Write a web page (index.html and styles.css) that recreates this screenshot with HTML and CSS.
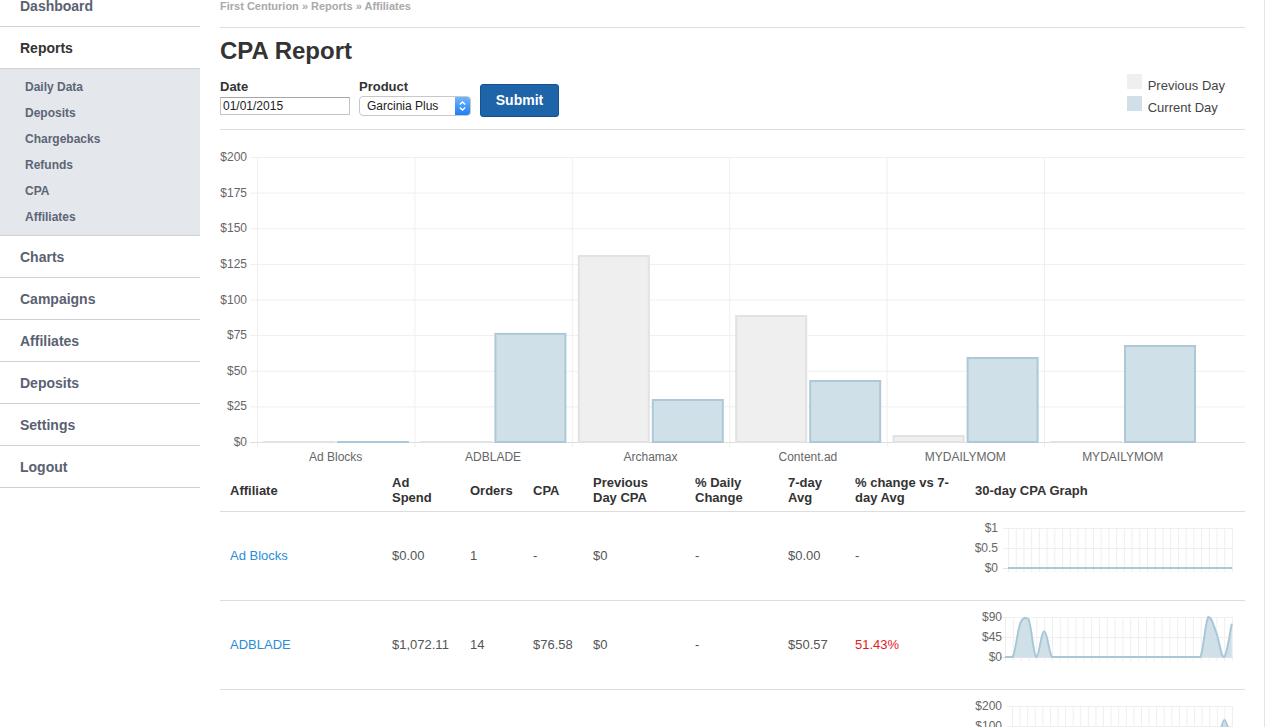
FILE: index.html
```html
<!DOCTYPE html>
<html lang="en">
<head>
<meta charset="utf-8">
<title>CPA Report</title>
<link rel="stylesheet" href="styles.css">
</head>
<body>
<div class="layout">
  <nav class="sidebar">
    <ul class="nav">
      <li><a class="nav-link" href="#">Dashboard</a></li>
      <li><a class="nav-link active" href="#">Reports</a>
        <ul class="subnav">
          <li><a href="#">Daily Data</a></li>
          <li><a href="#">Deposits</a></li>
          <li><a href="#">Chargebacks</a></li>
          <li><a href="#">Refunds</a></li>
          <li><a href="#">CPA</a></li>
          <li><a href="#">Affiliates</a></li>
        </ul>
      </li>
      <li><a class="nav-link" href="#">Charts</a></li>
      <li><a class="nav-link" href="#">Campaigns</a></li>
      <li><a class="nav-link" href="#">Affiliates</a></li>
      <li><a class="nav-link" href="#">Deposits</a></li>
      <li><a class="nav-link" href="#">Settings</a></li>
      <li><a class="nav-link" href="#">Logout</a></li>
    </ul>
  </nav>

  <main class="main">
    <div class="breadcrumb">First Centurion » Reports » Affiliates</div>
    <h1 class="title">CPA Report</h1>

    <div class="toolbar">
      <form class="filters">
        <div class="field">
          <label class="field-label">Date</label>
          <input class="date-input" type="text" value="01/01/2015">
        </div>
        <div class="field">
          <label class="field-label">Product</label>
          <div class="select">
            <span class="select-text">Garcinia Plus</span>
            <span class="select-arrow">
              <svg width="15" height="18" viewBox="0 0 15 18"><path d="M4.8 7.6 7.5 4.9 10.2 7.6M4.8 10.4 7.5 13.1 10.2 10.4" fill="none" stroke="#fff" stroke-width="1.4"/></svg>
            </span>
          </div>
        </div>
        <button class="btn-submit" type="button">Submit</button>
      </form>
      <ul class="legend">
        <li><span class="swatch swatch-prev"></span><span class="legend-text">Previous Day</span></li>
        <li><span class="swatch swatch-cur"></span><span class="legend-text">Current Day</span></li>
      </ul>
    </div>

    <svg class="chart" width="1025" height="340" viewBox="220 130 1025 340">
      <path class="grid-line" d="M250,157.5H1245M250,193.1H1245M250,228.8H1245M250,264.4H1245M250,300H1245M250,335.6H1245M250,371.3H1245M250,406.9H1245"/>
      <path class="grid-line" d="M257.5,157V447M414.9,157V447M572.3,157V447M729.7,157V447M887.1,157V447M1044.5,157V447"/>
      <path class="axis-line" d="M250,442.5H1245"/>
      <g class="axis-label y-label">
        <text x="247" y="161">$200</text>
        <text x="247" y="196.6">$175</text>
        <text x="247" y="232.3">$150</text>
        <text x="247" y="267.9">$125</text>
        <text x="247" y="303.5">$100</text>
        <text x="247" y="339.1">$75</text>
        <text x="247" y="374.8">$50</text>
        <text x="247" y="410.4">$25</text>
        <text x="247" y="446">$0</text>
      </g>
      <line class="bar-prev" x1="263" y1="442" x2="335" y2="442"/>
      <line class="bar-cur" x1="337" y1="442" x2="409" y2="442"/>
      <line class="bar-prev" x1="420.4" y1="442" x2="492.4" y2="442"/>
      <rect class="bar-cur" x="495.4" y="333.9" width="70" height="108.1"/>
      <rect class="bar-prev" x="578.8" y="256" width="70" height="186"/>
      <rect class="bar-cur" x="652.8" y="400" width="70" height="42"/>
      <rect class="bar-prev" x="736.2" y="316" width="70" height="126"/>
      <rect class="bar-cur" x="810.2" y="381" width="70" height="61"/>
      <rect class="bar-prev" x="893.6" y="436" width="70" height="6"/>
      <rect class="bar-cur" x="967.6" y="358" width="70" height="84"/>
      <line class="bar-prev" x1="1050" y1="442" x2="1122" y2="442"/>
      <rect class="bar-cur" x="1125" y="346" width="70" height="96"/>
      <g class="axis-label x-label">
        <text x="335.7" y="461">Ad Blocks</text>
        <text x="493.1" y="461">ADBLADE</text>
        <text x="650.5" y="461">Archamax</text>
        <text x="807.9" y="461">Content.ad</text>
        <text x="965.3" y="461">MYDAILYMOM</text>
        <text x="1122.7" y="461">MYDAILYMOM</text>
      </g>
    </svg>

    <table class="report">
      <colgroup>
        <col class="c-aff"><col class="c-spend"><col class="c-orders"><col class="c-cpa"><col class="c-prev"><col class="c-daily"><col class="c-avg"><col class="c-change"><col class="c-graph">
      </colgroup>
      <thead>
        <tr>
          <th>Affiliate</th>
          <th>Ad<br>Spend</th>
          <th>Orders</th>
          <th>CPA</th>
          <th>Previous<br>Day CPA</th>
          <th>% Daily<br>Change</th>
          <th>7-day<br>Avg</th>
          <th>% change vs 7-<br>day Avg</th>
          <th>30-day CPA Graph</th>
        </tr>
      </thead>
      <tbody>
        <tr>
          <td><a class="aff-link" href="#">Ad Blocks</a></td>
          <td>$0.00</td>
          <td>1</td>
          <td>-</td>
          <td>$0</td>
          <td>-</td>
          <td>$0.00</td>
          <td>-</td>
          <td class="graph-cell">
            <svg class="spark" width="260" height="68" viewBox="975 0 260 68">
              <path class="spark-grid" d="M1008.5,6v44m7.724-44v44m7.724-44v44m7.724-44v44m7.724-44v44m7.724-44v44m7.724-44v44m7.724-44v44m7.724-44v44m7.724-44v44m7.724-44v44m7.724-44v44m7.724-44v44m7.724-44v44m7.724-44v44m7.724-44v44m7.724-44v44m7.724-44v44m7.724-44v44m7.724-44v44m7.724-44v44m7.724-44v44m7.724-44v44m7.724-44v44m7.724-44v44m7.724-44v44m7.724-44v44m7.724-44v44m7.724-44v44m7.724-44v44"/>
              <path class="spark-grid" d="M1003,6.5H1232.5M1003,26.5H1232.5"/>
              <path class="spark-axis" d="M1003,46.5H1232.5"/>
              <g class="spark-label">
                <text x="998" y="10">$1</text>
                <text x="998" y="30">$0.5</text>
                <text x="998" y="50">$0</text>
              </g>
              <path class="spark-line" d="M1008,46L1232,46"/>
            </svg>
          </td>
        </tr>
        <tr>
          <td><a class="aff-link" href="#">ADBLADE</a></td>
          <td>$1,072.11</td>
          <td>14</td>
          <td>$76.58</td>
          <td>$0</td>
          <td>-</td>
          <td>$50.57</td>
          <td class="neg">51.43%</td>
          <td class="graph-cell">
            <svg class="spark" width="260" height="68" viewBox="975 0 260 68">
              <path class="spark-grid" d="M1005.5,6v44m7.828-44v44m7.828-44v44m7.828-44v44m7.828-44v44m7.828-44v44m7.828-44v44m7.828-44v44m7.828-44v44m7.828-44v44m7.828-44v44m7.828-44v44m7.828-44v44m7.828-44v44m7.828-44v44m7.828-44v44m7.828-44v44m7.828-44v44m7.828-44v44m7.828-44v44m7.828-44v44m7.828-44v44m7.828-44v44m7.828-44v44m7.828-44v44m7.828-44v44m7.828-44v44m7.828-44v44m7.828-44v44m7.828-44v44"/>
              <path class="spark-grid" d="M1000,6.5H1232.5M1000,26.5H1232.5"/>
              <path class="spark-axis" d="M1000,46.5H1232.5"/>
              <g class="spark-label">
                <text x="1002" y="10">$90</text>
                <text x="1002" y="30">$45</text>
                <text x="1002" y="50">$0</text>
              </g>
              <path class="spark-fill" d="M1005,46C1006.56,46 1009.68,46 1012.8,46C1015.92,39.06 1017.46,18.86 1020.6,11.3C1023.74,6 1025.36,6 1028.5,8.2C1031.64,15.14 1033.18,43.6 1036.3,46C1039.42,46 1040.98,20.2 1044.1,20.2C1047.22,20.2 1048.78,40.84 1051.9,46C1055.02,46 1056.58,46 1059.7,46L1200.5,46C1203.62,38 1205.18,11 1208.3,6C1211.42,6 1212.96,13 1216.1,21C1219.24,29 1220.86,46 1224,46C1227.14,44.34 1230.24,19.36 1231.8,12.7L1231.8,46Z"/>
              <path class="spark-line" d="M1005,46C1006.56,46 1009.68,46 1012.8,46C1015.92,39.06 1017.46,18.86 1020.6,11.3C1023.74,6 1025.36,6 1028.5,8.2C1031.64,15.14 1033.18,43.6 1036.3,46C1039.42,46 1040.98,20.2 1044.1,20.2C1047.22,20.2 1048.78,40.84 1051.9,46C1055.02,46 1056.58,46 1059.7,46L1200.5,46C1203.62,38 1205.18,11 1208.3,6C1211.42,6 1212.96,13 1216.1,21C1219.24,29 1220.86,46 1224,46C1227.14,44.34 1230.24,19.36 1231.8,12.7"/>
            </svg>
          </td>
        </tr>
        <tr>
          <td><a class="aff-link" href="#">Archamax</a></td>
          <td>$3,412.50</td>
          <td>26</td>
          <td>$131.25</td>
          <td>$30.21</td>
          <td>-</td>
          <td>$98.40</td>
          <td class="neg">33.38%</td>
          <td class="graph-cell">
            <svg class="spark" width="260" height="68" viewBox="975 0 260 68">
              <path class="spark-grid" d="M1012.5,6v44m7.586-44v44m7.586-44v44m7.586-44v44m7.586-44v44m7.586-44v44m7.586-44v44m7.586-44v44m7.586-44v44m7.586-44v44m7.586-44v44m7.586-44v44m7.586-44v44m7.586-44v44m7.586-44v44m7.586-44v44m7.586-44v44m7.586-44v44m7.586-44v44m7.586-44v44m7.586-44v44m7.586-44v44m7.586-44v44m7.586-44v44m7.586-44v44m7.586-44v44m7.586-44v44m7.586-44v44m7.586-44v44m7.586-44v44"/>
              <path class="spark-grid" d="M1007,6.5H1232.5M1007,26.5H1232.5"/>
              <path class="spark-axis" d="M1007,46.5H1232.5"/>
              <g class="spark-label">
                <text x="1002" y="10">$200</text>
                <text x="1002" y="30">$100</text>
                <text x="1002" y="50">$0</text>
              </g>
              <path class="spark-fill" d="M1012,46L1216.8,46C1219.84,40.8 1221.36,20 1224.4,20C1227.44,20 1230.48,40.8 1232,46Z"/>
              <path class="spark-line" d="M1012,46L1216.8,46C1219.84,40.8 1221.36,20 1224.4,20C1227.44,20 1230.48,40.8 1232,46"/>
            </svg>
          </td>
        </tr>
      </tbody>
    </table>
  </main>
</div>
</body>
</html>
```

FILE: styles.css
```css
html, body {
  margin: 0;
  padding: 0;
  height: 100%;
  overflow: hidden;
}

body {
  font-family: "Liberation Sans", Arial, Helvetica, sans-serif;
  color: #333;
  background: #fff;
}

.layout {
  display: flex;
  align-items: flex-start;
  margin-top: -15px;
}

/* Sidebar */
.sidebar {
  width: 200px;
  flex: none;
}

.nav,
.subnav {
  list-style: none;
  margin: 0;
  padding: 0;
}

.nav-link {
  display: block;
  height: 39px;
  padding-top: 2px;
  line-height: 39px;
  padding-left: 20px;
  font-size: 14px;
  font-weight: bold;
  color: #5a6172;
  text-decoration: none;
  border-bottom: 1px solid #cdd1d8;
}

.nav-link.active {
  color: #333;
}

.subnav {
  padding: 5px 0 5px;
  background: #e4e7ec;
  border-bottom: 1px solid #cdd1d8;
}

.subnav a {
  display: block;
  line-height: 26px;
  padding-left: 25px;
  font-size: 12px;
  font-weight: bold;
  color: #5e6576;
  text-decoration: none;
}

/* Main */
.main {
  flex: 1;
  min-width: 0;
  padding: 0 19px 0 20px;
  margin-right: 1px;
  border-right: 1px solid #e3e3e3;
  min-height: 900px;
}

.breadcrumb {
  padding: 14px 0;
  font-size: 11px;
  line-height: 14px;
  font-weight: bold;
  color: #a9a9a9;
  border-bottom: 1px solid #ddd;
}

.title {
  margin: 9px 0 9px;
  font-size: 24px;
  line-height: 28px;
  font-weight: bold;
  color: #333;
}

.toolbar {
  display: flex;
  justify-content: space-between;
  align-items: flex-start;
  height: 55px;
  border-bottom: 1px solid #ddd;
}

.filters {
  display: flex;
  align-items: flex-start;
  gap: 9px;
  margin: 0;
  padding-top: 5px;
}

.field {
  display: flex;
  flex-direction: column;
}

.field-label {
  font-size: 13px;
  line-height: 16px;
  font-weight: bold;
  color: #333;
}

.date-input {
  box-sizing: border-box;
  width: 130px;
  height: 18px;
  margin: 2px 0 0;
  padding: 0 2px;
  border: 1px solid #c4c4c4;
  border-top-color: #a5a5a5;
  border-radius: 0;
  font-family: "Liberation Sans", Arial, sans-serif;
  font-size: 12px;
  color: #222;
  outline: none;
}

.select {
  box-sizing: border-box;
  display: flex;
  width: 112px;
  height: 20px;
  margin-top: 1px;
  border: 1px solid #c8c8c8;
  border-radius: 4px;
  background: #fff;
  overflow: hidden;
}

.select-text {
  flex: 1;
  padding-left: 7px;
  font-size: 12px;
  line-height: 18px;
  color: #222;
  white-space: nowrap;
}

.select-arrow {
  flex: none;
  width: 15px;
  height: 18px;
  background: linear-gradient(#72b5fb, #1c7ff5);
}

.select-arrow svg {
  display: block;
}

.btn-submit {
  box-sizing: border-box;
  width: 79px;
  height: 33px;
  margin-top: 5px;
  padding: 0 0 2px;
  border: 1px solid #145190;
  border-radius: 3px;
  background: #1d64a9;
  color: #fff;
  font-family: "Liberation Sans", Arial, sans-serif;
  font-size: 14px;
  font-weight: bold;
}

.legend {
  list-style: none;
  margin: 0 20px 0 0;
  padding: 0;
}

.legend li {
  display: flex;
  align-items: flex-start;
  height: 22px;
}

.swatch {
  width: 15px;
  height: 15px;
  margin-right: 6px;
}

.swatch-prev {
  background: #efefef;
}

.swatch-cur {
  background: #cfe0e8;
}

.legend-text {
  padding-top: 4px;
  font-size: 13px;
  line-height: 16px;
  color: #444;
}

/* Chart */
.chart {
  display: block;
}

.grid-line {
  fill: none;
  stroke: #efefef;
  stroke-width: 1;
}

.axis-line {
  fill: none;
  stroke: #dedede;
  stroke-width: 1;
}

.axis-label {
  font-family: "Liberation Sans", Arial, sans-serif;
  font-size: 12px;
  fill: #666;
}

.y-label {
  text-anchor: end;
}

.x-label {
  text-anchor: middle;
}

.bar-prev {
  fill: #efefef;
  stroke: #e2e2e2;
  stroke-width: 2;
}

.bar-cur {
  fill: #cfe0e8;
  stroke: #adc9d7;
  stroke-width: 2;
}

/* Table */
.report {
  width: 1025px;
  table-layout: fixed;
  border-collapse: separate;
  border-spacing: 0;
}

.c-aff { width: 162px; }
.c-spend { width: 78px; }
.c-orders { width: 63px; }
.c-cpa { width: 60px; }
.c-prev { width: 102px; }
.c-daily { width: 93px; }
.c-avg { width: 67px; }
.c-change { width: 120px; }
.c-graph { width: 280px; }

.report th {
  padding: 5px 10px 6px;
  text-align: left;
  vertical-align: middle;
  font-size: 13px;
  line-height: 15px;
  font-weight: bold;
  color: #333;
  border-bottom: 1px solid #ddd;
}

.report td {
  padding: 0 10px;
  vertical-align: middle;
  font-size: 13px;
  line-height: 16px;
  color: #555;
  border-bottom: 1px solid #ddd;
}

.report td.graph-cell {
  padding: 10px;
}

.aff-link {
  color: #2a8cd9;
  text-decoration: none;
}

.neg {
  color: #e41b1b !important;
}

.spark {
  display: block;
}

.spark-grid {
  fill: none;
  stroke: #efefef;
  stroke-width: 1;
}

.spark-axis {
  fill: none;
  stroke: #e2e2e2;
  stroke-width: 1;
}

.spark-label {
  font-family: "Liberation Sans", Arial, sans-serif;
  font-size: 12px;
  fill: #666;
  text-anchor: end;
}

.spark-fill {
  fill: #cfe0e8;
  stroke: none;
}

.spark-line {
  fill: none;
  stroke: #a9c7d6;
  stroke-width: 2;
}
```
